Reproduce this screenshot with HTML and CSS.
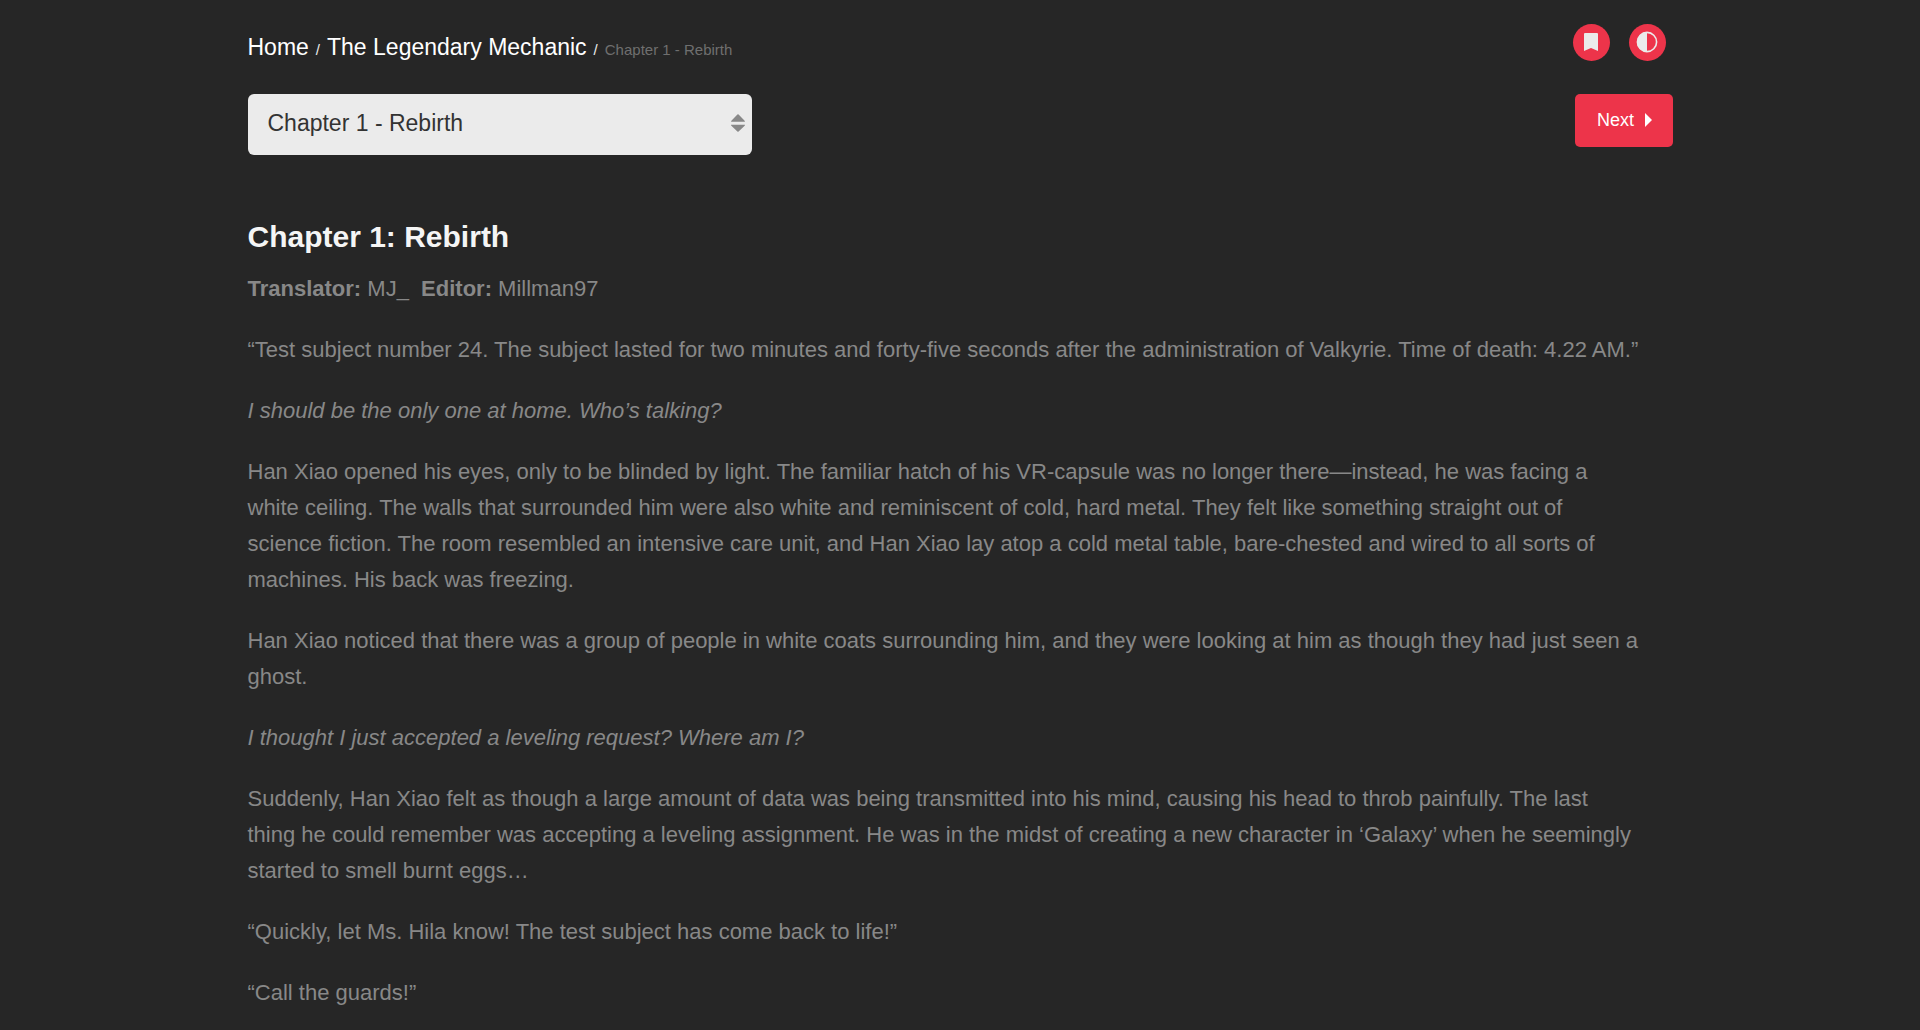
FILE: index.html
```html
<!DOCTYPE html>
<html lang="en">
<head>
<meta charset="utf-8">
<meta name="viewport" content="width=device-width, initial-scale=1">
<title>The Legendary Mechanic - Chapter 1 - Rebirth</title>
<link rel="stylesheet" href="styles.css">
</head>
<body>
<div class="page">
  <header class="topbar">
    <nav aria-label="Breadcrumb">
      <ol class="breadcrumb">
        <li><a href="#home">Home</a></li>
        <li><a href="#novel">The Legendary Mechanic</a></li>
        <li aria-current="page">Chapter 1 - Rebirth</li>
      </ol>
    </nav>
    <div class="tools">
      <button class="tool" type="button" aria-label="Bookmark">
        <svg width="14" height="18" viewBox="0 0 14 18" aria-hidden="true"><path d="M1 0h12q1 0 1 1v17l-7-3-7 3V1q0-1 1-1z" fill="currentColor"/></svg>
      </button>
      <button class="tool" type="button" aria-label="Toggle contrast">
        <svg width="22" height="22" viewBox="0 0 22 22" aria-hidden="true"><circle cx="11" cy="11" r="9.6" fill="none" stroke="currentColor" stroke-width="1.6"/><path d="M11 1a10 10 0 0 0 0 20z" fill="currentColor"/></svg>
      </button>
    </div>
  </header>

  <div class="chapter-nav">
    <div class="picker">
      <select class="picker-select" aria-label="Chapter">
        <option>Chapter 1 - Rebirth</option>
      </select>
      <svg class="picker-arrows" width="14" height="18" viewBox="0 0 14 18" aria-hidden="true"><path d="M0 7.8Q0 7 .6 6.400L6.400.4Q7 0 7.600.4L13.400 6.400Q14 7 14 7.800zM0 10.800h14Q14 11.500 13.400 12.100L7.600 17.600Q7 18 6.400 17.600L.6 12.100Q0 11.500 0 10.800z" fill="currentColor"/></svg>
    </div>
    <button class="next" type="button">Next
      <svg width="7" height="14" viewBox="0 0 7 14" aria-hidden="true"><path d="M0 0l7 7-7 7z" fill="currentColor"/></svg>
    </button>
  </div>

  <article class="chapter">
    <h1>Chapter 1: Rebirth</h1>
    <p><strong>Translator:</strong> MJ_&nbsp; <strong>Editor:</strong> Millman97</p>
    <p>“Test subject number 24. The subject lasted for two minutes and forty-five seconds after the administration of Valkyrie. Time of death: 4.22 AM.”</p>
    <p><em>I should be the only one at home. Who’s talking?</em></p>
    <p>Han Xiao opened his eyes, only to be blinded by light. The familiar hatch of his VR-capsule was no longer there—instead, he was facing a white ceiling. The walls that surrounded him were also white and reminiscent of cold, hard metal. They felt like something straight out of science fiction. The room resembled an intensive care unit, and Han Xiao lay atop a cold metal table, bare-chested and wired to all sorts of machines. His back was freezing.</p>
    <p>Han Xiao noticed that there was a group of people in white coats surrounding him, and they were looking at him as though they had just seen a ghost.</p>
    <p><em>I thought I just accepted a leveling request? Where am I?</em></p>
    <p>Suddenly, Han Xiao felt as though a large amount of data was being transmitted into his mind, causing his head to throb painfully. The last thing he could remember was accepting a leveling assignment. He was in the midst of creating a new character in ‘Galaxy’ when he seemingly started to smell burnt eggs…</p>
    <p>“Quickly, let Ms. Hila know! The test subject has come back to life!”</p>
    <p>“Call the guards!”</p>
  </article>
</div>
</body>
</html>
```
FILE: styles.css
```css
* {
  box-sizing: border-box;
}

body {
  margin: 0;
  background: #262626;
  color: #888;
  font: 22px/36px "Liberation Sans", Arial, sans-serif;
}

button,
select {
  border: 0;
  font-family: inherit;
  cursor: pointer;
}

.page {
  max-width: 1425px;
  margin: 0 auto;
  padding-top: 24px;
}

.topbar {
  display: flex;
  justify-content: space-between;
  align-items: flex-start;
}

.breadcrumb {
  display: flex;
  align-items: baseline;
  margin: 5px 0 0;
  padding: 0;
  list-style: none;
  font-size: 15px;
  color: #6f6f6f;
}

.breadcrumb a {
  color: #fff;
  font-size: 23px;
  text-decoration: none;
}

.breadcrumb li + li::before {
  content: "/";
  padding: 0 7px;
  color: #ebebeb;
}

.tools {
  display: flex;
  gap: 19px;
  margin-right: 7px;
}

.tool {
  display: grid;
  place-items: center;
  width: 37px;
  height: 37px;
  padding: 0 0 2px;
  border-radius: 50%;
  background: #ed344a;
  color: #ebebeb;
}

.chapter-nav {
  display: flex;
  justify-content: space-between;
  align-items: flex-start;
  margin-top: 26px;
}

.picker {
  position: relative;
  flex: 0 1 504px;
}

.picker-select {
  appearance: none;
  display: block;
  width: 100%;
  height: 61px;
  padding: 0 40px 4px 20px;
  border-radius: 6px;
  background: #ebebeb;
  color: #333;
  font-size: 23px;
}

.picker-arrows {
  position: absolute;
  top: 20px;
  right: 7px;
  color: #888;
  pointer-events: none;
}

.next {
  display: flex;
  justify-content: center;
  align-items: center;
  gap: 11px;
  width: 98px;
  height: 53px;
  padding: 0 0 1px 2px;
  border-radius: 5px;
  background: #ed344a;
  color: #fff;
  font-size: 18px;
}

.chapter {
  margin-top: 60px;
  padding-right: 32px;
}

.chapter h1 {
  margin: 0 0 12px;
  color: #f5f5f5;
  font-size: 30px;
  line-height: 44px;
}

.chapter p {
  margin: 0 0 25px;
}
```
